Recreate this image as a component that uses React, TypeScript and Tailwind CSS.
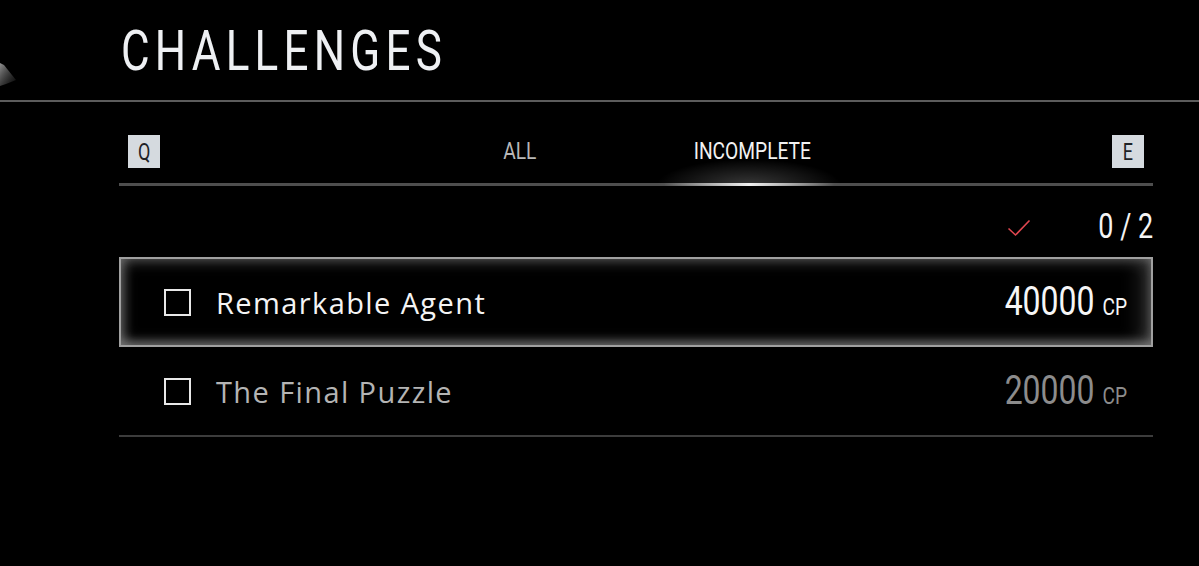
import React from "react";

const roboto = "font-['Roboto',sans-serif]";

function KeyBox({ k }: { k: string }) {
  return (
    <div className={`w-[32px] h-[33px] bg-[#d5dadf] flex items-center justify-center text-[#1e2226] text-[24px] leading-none ${roboto}`}>
      <span className="inline-block scale-x-[0.75]">{k}</span>
    </div>
  );
}

function CheckBox() {
  return <div className="w-[27px] h-[27px] border-2 border-[#e8e8e8] shrink-0" />;
}

function Row({ title, cp, selected }: { title: string; cp: string; selected?: boolean }) {
  return (
    <div
      className={
        selected
          ? "h-[90px] flex items-center pl-[43px] pr-[24px] border-2 border-[#a0a0a0] shadow-[inset_0_0_16px_rgba(255,255,255,0.28),inset_0_-5px_8px_rgba(255,255,255,0.18),inset_-14px_0_18px_rgba(255,255,255,0.1),inset_6px_0_10px_rgba(255,255,255,0.12)] bg-black"
          : "h-[90px] flex items-center pl-[45px] pr-[26px] border-b-2 border-[#3c3c3c]"
      }
    >
      <CheckBox />
      <div
        className={`ml-[25px] flex-1 text-[29px] tracking-[1.4px] leading-none font-['Open_Sans',sans-serif] ${
          selected ? "text-[#f4f4f4]" : "text-[#b4b4b4]"
        }`}
      >
        {title}
      </div>
      <div
        className={`flex items-baseline origin-right scale-x-[0.8] ${roboto} ${
          selected ? "text-[#f6f6f6]" : "text-[#8c8c8c]"
        }`}
      >
        <span className="text-[40px] leading-none">{cp}</span>
        <span className="text-[24px] leading-none ml-[10px]">CP</span>
      </div>
    </div>
  );
}

export default function App() {
  return (
    <div className="w-[1199px] h-[566px] bg-black relative overflow-hidden">
      {/* corner streak */}
      <svg className="absolute left-0 top-[58px]" width="20" height="32" viewBox="0 0 20 32">
        <defs>
          <linearGradient id="st" x1="0" y1="0" x2="1" y2="1">
            <stop offset="0" stopColor="#aaaaaa" stopOpacity="0.85" />
            <stop offset="1" stopColor="#444444" stopOpacity="0.15" />
          </linearGradient>
        </defs>
        <polygon points="0,5 4,7 16,22 6,26 0,28" fill="url(#st)" />
      </svg>

      {/* header */}
      <div className="h-[100px] pl-[121px] flex items-start pt-[24px]">
        <h1
          className={`inline-block origin-left scale-x-[0.8] text-[55px] leading-none tracking-[6.5px] text-[#eef0f3] ${roboto}`}
        >
          CHALLENGES
        </h1>
      </div>
      <div className="h-[2px] bg-[#5c5c5c]" />

      <div className="ml-[119px] w-[1034px]">
        {/* tabs */}
        <div className="h-[81px] flex items-end justify-between px-[9px] pb-[15px]">
          <KeyBox k="Q" />
          <div className={`flex text-[24px] leading-none ${roboto} mb-[5px]`}>
            <div className="w-[232px] text-center text-[#b8b8b8]">
              <span className="inline-block scale-x-[0.8]">ALL</span>
            </div>
            <div className="w-[232px] text-center text-[#f2f2f2]">
              <span className="inline-block scale-x-[0.8]">INCOMPLETE</span>
            </div>
          </div>
          <KeyBox k="E" />
        </div>
        <div className="relative h-[3px] bg-[#4e4e4e]">
          <div className="absolute left-[530px] top-[-26px] w-[200px] h-[28px] bg-[radial-gradient(ellipse_at_bottom,rgba(255,255,255,0.22),rgba(255,255,255,0)_65%)]" />
          <div className="absolute left-[545px] top-0 w-[170px] h-[3px] bg-[linear-gradient(90deg,rgba(255,255,255,0),#f0f0f0_50%,rgba(255,255,255,0))]" />
        </div>

        {/* count */}
        <div className="h-[71px] flex items-start justify-end">
          <svg width="24" height="18" viewBox="0 0 24 18" className="mt-[33px] mr-[51px]">
            <path d="M1.5 9.5 L8.5 16 L22.5 1.5" fill="none" stroke="#e0464f" strokeWidth="1.6" />
          </svg>
          <div className={`mt-[23px] inline-block origin-right scale-x-[0.77] text-[35px] leading-none text-[#f4f4f4] ${roboto}`}>
            0 / 2
          </div>
        </div>

        <Row title="Remarkable Agent" cp="40000" selected />
        <Row title="The Final Puzzle" cp="20000" />
      </div>
    </div>
  );
}
